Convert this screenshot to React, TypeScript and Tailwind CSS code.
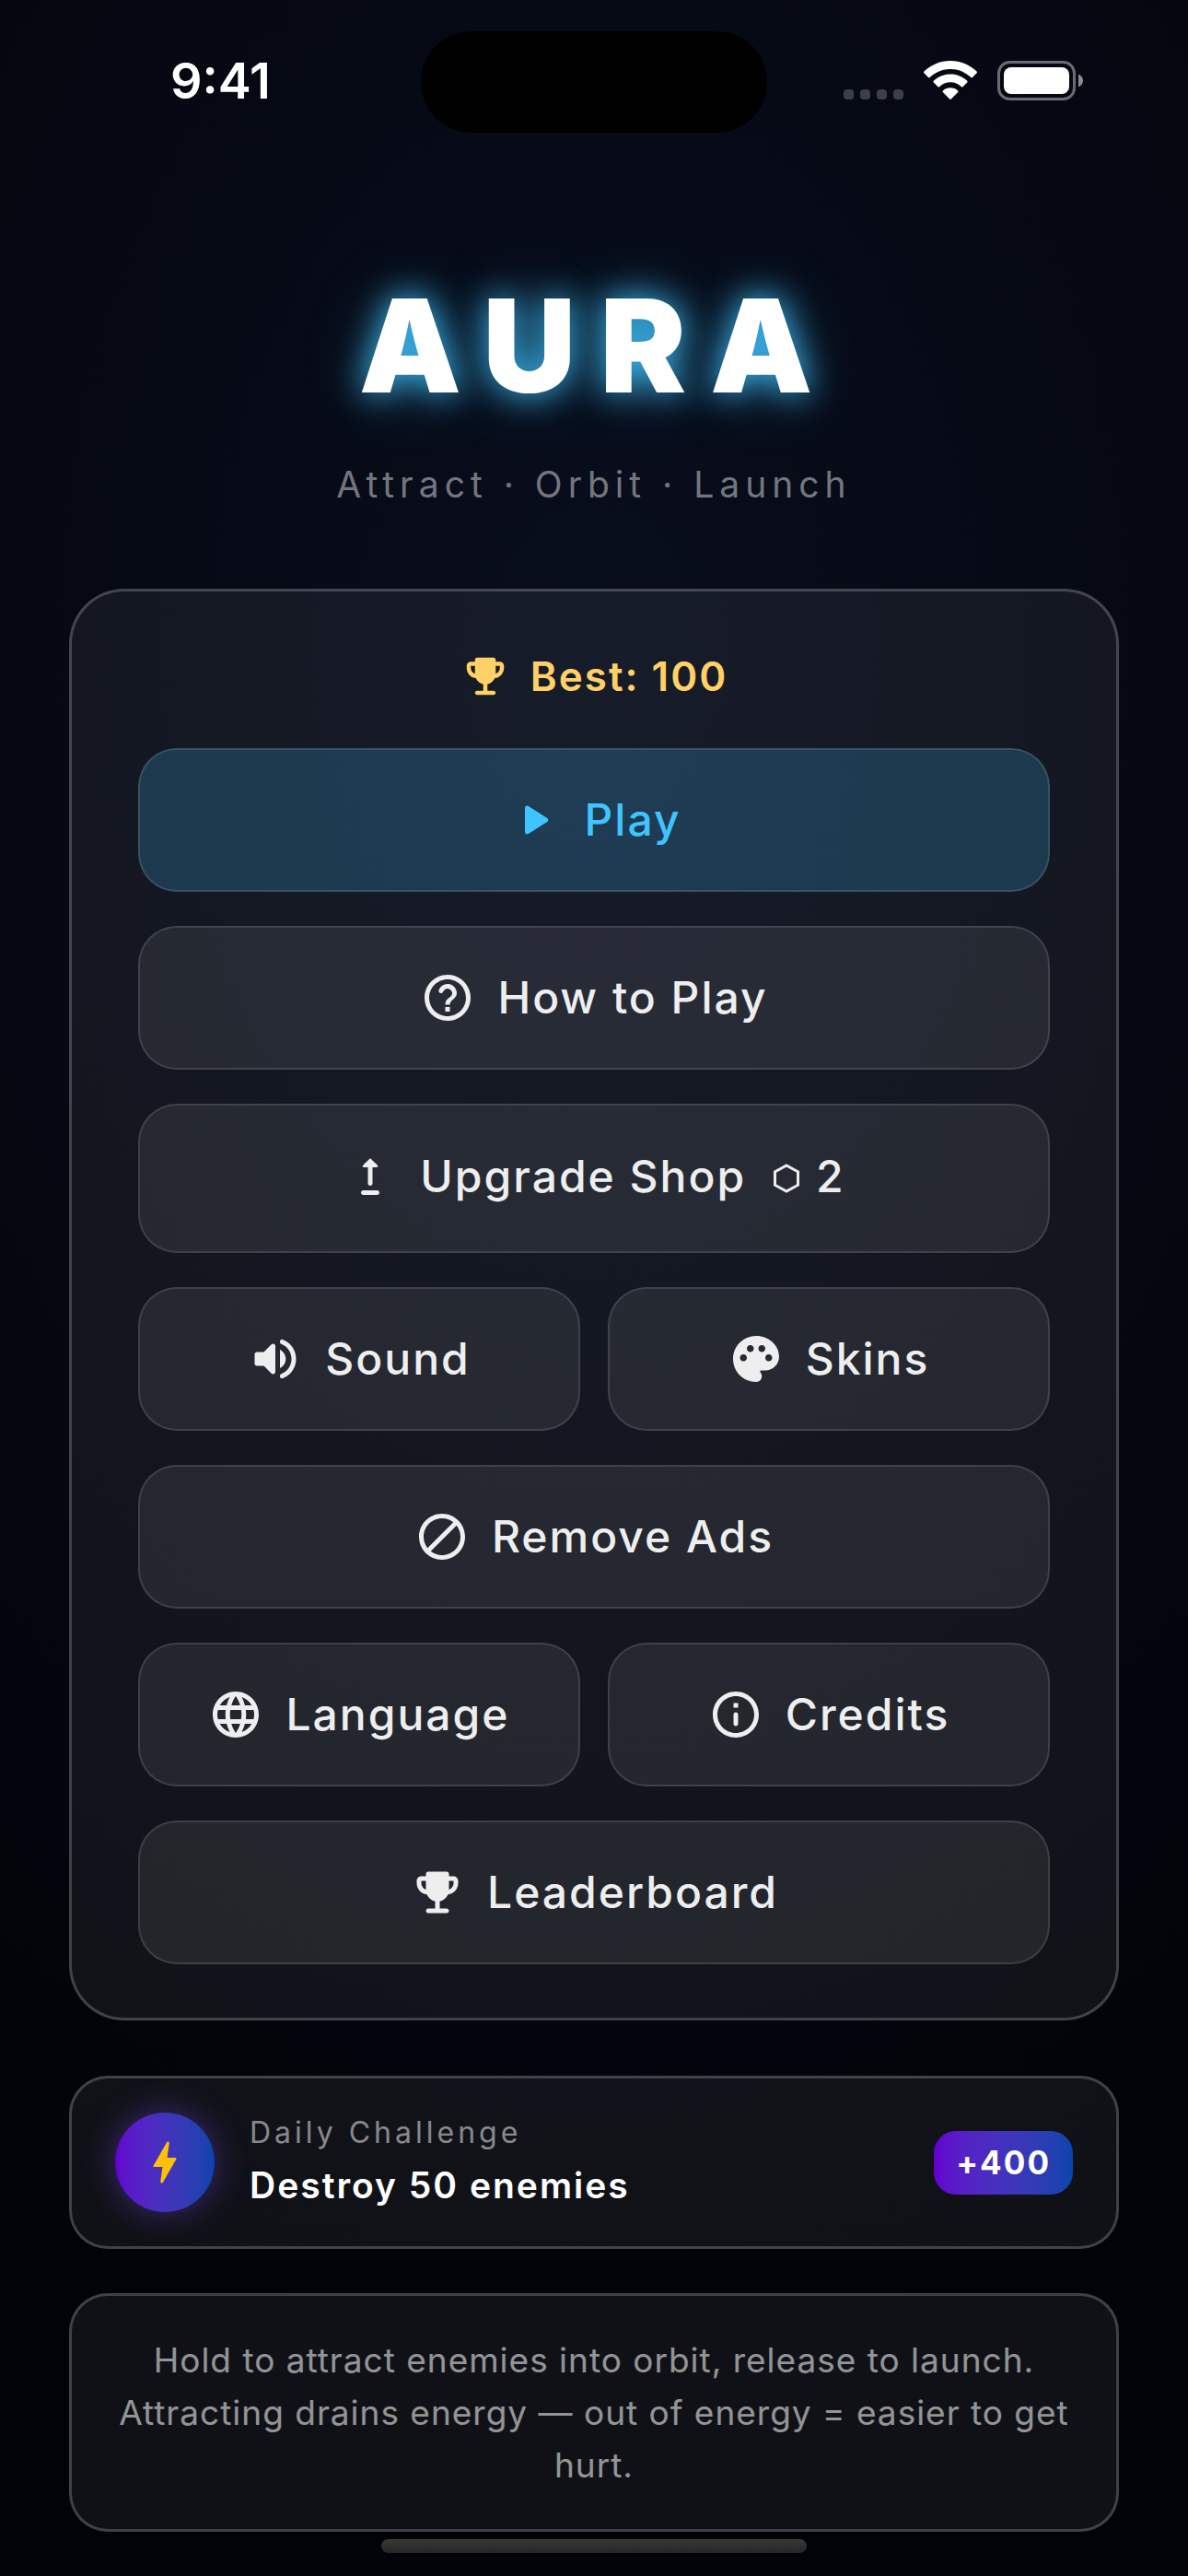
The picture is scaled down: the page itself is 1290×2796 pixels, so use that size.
import React, { type ReactNode } from "react";

type IconProps = { className?: string };

function Icon({ className = "size-[60px]", children }: IconProps & { children: ReactNode }) {
  return (
    <svg viewBox="0 0 24 24" className={`shrink-0 ${className}`} fill="currentColor" aria-hidden="true">
      {children}
    </svg>
  );
}

const TrophyIcon = ({ className }: IconProps) => (
  <Icon className={className}>
    <path d="M19 5h-2V4c0-.55-.45-1-1-1H8c-.55 0-1 .45-1 1v1H5c-1.1 0-2 .9-2 2v1c0 2.55 1.92 4.63 4.39 4.94.63 1.5 1.98 2.63 3.61 2.96V19H8c-.55 0-1 .45-1 1s.45 1 1 1h8c.55 0 1-.45 1-1s-.45-1-1-1h-3v-3.1c1.63-.33 2.98-1.46 3.61-2.96C19.08 12.63 21 10.55 21 8V7c0-1.1-.9-2-2-2zM5 8V7h2v3.82C5.84 10.4 5 9.3 5 8zm14 0c0 1.3-.84 2.4-2 2.82V7h2v1z" />
  </Icon>
);

const PlayIcon = () => (
  <Icon>
    <path d="M8 6.82v10.36c0 .79.87 1.27 1.54.84l8.14-5.18c.62-.39.62-1.29 0-1.69L9.54 5.98C8.87 5.55 8 6.03 8 6.82z" />
  </Icon>
);

const HelpIcon = () => (
  <Icon>
    <path d="M12 2C6.48 2 2 6.48 2 12s4.48 10 10 10 10-4.48 10-10S17.52 2 12 2zm0 18c-4.41 0-8-3.59-8-8s3.59-8 8-8 8 3.59 8 8-3.59 8-8 8zm-1-4h2v2h-2zm1.61-9.96c-2.06-.3-3.88.97-4.43 2.79-.18.58.26 1.17.87 1.17h.2c.41 0 .74-.29.88-.67.32-.89 1.27-1.5 2.3-1.28.95.2 1.65 1.13 1.57 2.1-.1 1.34-1.62 1.63-2.45 2.88 0 .01-.01.01-.01.02-.01.02-.02.03-.03.05-.09.15-.18.32-.25.5-.01.03-.03.05-.04.08-.01.02-.01.04-.02.07-.12.34-.2.75-.2 1.25h2c0-.42.11-.77.28-1.07.02-.03.03-.06.05-.09.08-.14.18-.27.28-.39.01-.01.02-.03.03-.04.1-.12.21-.23.33-.34.96-.91 2.26-1.65 1.99-3.56-.24-1.74-1.61-3.21-3.35-3.47z" />
  </Icon>
);

const UpgradeIcon = () => (
  <Icon>
    <path d="M16 19c0 .55-.45 1-1 1H9c-.55 0-1-.45-1-1s.45-1 1-1h6c.55 0 1 .45 1 1zM11 7.99H9.21c-.45 0-.67-.54-.35-.85l2.79-2.79c.2-.2.51-.2.71 0l2.79 2.79c.31.31.09.85-.36.85H13V15c0 .55-.45 1-1 1s-1-.45-1-1V7.99z" />
  </Icon>
);

const SoundIcon = () => (
  <Icon>
    <path d="M3 10v4c0 .55.45 1 1 1h3l3.29 3.29c.63.63 1.71.18 1.71-.71V6.41c0-.89-1.08-1.34-1.71-.71L7 9H4c-.55 0-1 .45-1 1zm13.5 2c0-1.77-1.02-3.29-2.5-4.03v8.05c1.48-.73 2.5-2.25 2.5-4.02zM14 4.45v.2c0 .38.25.71.6.85C17.18 6.53 19 9.06 19 12s-1.82 5.47-4.4 6.5c-.36.14-.6.47-.6.85v.2c0 .63.63 1.07 1.21.85C18.6 19.11 21 15.84 21 12s-2.4-7.11-5.79-8.4c-.58-.23-1.21.22-1.21.85z" />
  </Icon>
);

const PaletteIcon = () => (
  <Icon>
    <path d="M12 2C6.49 2 2 6.49 2 12s4.49 10 10 10c1.38 0 2.5-1.12 2.5-2.5 0-.61-.23-1.2-.64-1.67-.08-.1-.13-.21-.13-.33 0-.28.22-.5.5-.5H16c3.31 0 6-2.69 6-6 0-4.96-4.49-9-10-9zM6.500 13c-.83 0-1.500-.67-1.500-1.500S5.670 10 6.500 10s1.500.670 1.500 1.500S7.330 13 6.500 13zm3-4C8.670 9 8 8.330 8 7.500S8.670 6 9.500 6s1.500.670 1.500 1.500S10.330 9 9.500 9zm5 0c-.83 0-1.500-.67-1.500-1.500S13.670 6 14.500 6s1.500.670 1.500 1.500S15.330 9 14.500 9zm3 4c-.83 0-1.500-.67-1.500-1.500s.67-1.500 1.500-1.500 1.500.670 1.500 1.500-.67 1.500-1.500 1.500z" />
  </Icon>
);

const BlockIcon = () => (
  <Icon>
    <path d="M12 2C6.48 2 2 6.48 2 12s4.48 10 10 10 10-4.48 10-10S17.52 2 12 2zM4 12c0-4.42 3.58-8 8-8 1.85 0 3.55.63 4.9 1.69L5.69 16.9C4.63 15.55 4 13.85 4 12zm8 8c-1.85 0-3.55-.63-4.9-1.69L18.31 7.1C19.37 8.45 20 10.15 20 12c0 4.42-3.58 8-8 8z" />
  </Icon>
);

const GlobeIcon = () => (
  <Icon>
    <path d="M11.99 2C6.47 2 2 6.48 2 12s4.47 10 9.99 10C17.52 22 22 17.52 22 12S17.52 2 11.99 2zm6.93 6h-2.95c-.32-1.25-.78-2.45-1.38-3.56 1.84.63 3.37 1.91 4.33 3.56zM12 4.04c.83 1.2 1.48 2.53 1.91 3.96h-3.82c.43-1.43 1.08-2.76 1.91-3.96zM4.26 14C4.1 13.36 4 12.69 4 12s.1-1.36.26-2h3.38c-.08.66-.14 1.32-.14 2s.06 1.34.14 2H4.26zm.82 2h2.95c.32 1.25.78 2.45 1.38 3.56-1.84-.63-3.37-1.9-4.33-3.56zm2.95-8H5.08c.96-1.66 2.49-2.93 4.33-3.56C8.81 5.55 8.35 6.75 8.03 8zM12 19.96c-.83-1.2-1.48-2.53-1.91-3.96h3.82c-.43 1.43-1.08 2.76-1.91 3.96zM14.34 14H9.66c-.09-.66-.16-1.32-.16-2s.07-1.35.16-2h4.68c.09.65.16 1.32.16 2s-.07 1.34-.16 2zm.25 5.56c.6-1.11 1.06-2.31 1.38-3.56h2.95c-.96 1.65-2.49 2.93-4.33 3.56zM16.36 14c.08-.66.14-1.32.14-2s-.06-1.34-.14-2h3.38c.16.64.26 1.31.26 2s-.1 1.36-.26 2h-3.38z" />
  </Icon>
);

const InfoIcon = () => (
  <Icon>
    <path d="M11 7h2v2h-2zm1 10c.55 0 1-.45 1-1v-4c0-.55-.45-1-1-1s-1 .45-1 1v4c0 .55.45 1 1 1zm0-15C6.48 2 2 6.48 2 12s4.48 10 10 10 10-4.48 10-10S17.52 2 12 2zm0 18c-4.41 0-8-3.59-8-8s3.59-8 8-8 8 3.59 8 8-3.59 8-8 8z" />
  </Icon>
);

function StatusBar() {
  return (
    <header className="grid h-[178px] grid-cols-[1fr_376px_1fr] items-center">
      <div className="pb-[2px] pl-[22px] text-center text-[54px] leading-[60px] font-semibold">9:41</div>
      <div className="h-[110px] rounded-full bg-black" />
      <div className="flex items-center justify-end gap-[22px] pr-[112px] pb-[4px]">
        <div className="flex gap-[7px] pt-[30px]">
          {[0, 1, 2, 3].map((dot) => (
            <span key={dot} className="h-[11px] w-[11px] rounded-[4px] bg-[#3d3f47]" />
          ))}
        </div>
        <svg viewBox="0 0 58 43" className="h-[43px] w-[58px]" fill="white" aria-label="Wi-Fi">
          <path d="M29 0C18.200 0 8 4.200.4 11.600c-.5.500-.5 1.200 0 1.700l4.600 4.700c.5.500 1.200.5 1.700 0C12.700 12.300 20.500 9 29 9s16.300 3.300 22.300 9c.5.500 1.200.5 1.700 0l4.600-4.700c.5-.5.5-1.200 0-1.700C50 4.200 39.800 0 29 0z" />
          <path d="M29 14.600c-7 0-13.400 2.700-18.200 7.200-.5.500-.5 1.200 0 1.700l4.700 4.700c.5.500 1.100.5 1.600 0C20.300 25.200 24.500 23.300 29 23.300s8.700 1.900 11.900 4.900c.5.500 1.100.5 1.600 0l4.700-4.700c.5-.5.5-1.200 0-1.700C42.400 17.300 36 14.600 29 14.600z" />
          <path d="M29 29.200c-3.200 0-6 1.200-8.200 3.200-.5.500-.5 1.100 0 1.600l7.400 7.600c.5.500 1.100.5 1.600 0l7.400-7.600c.5-.5.500-1.100 0-1.600-2.200-2-5-3.200-8.200-3.200z" />
        </svg>
        <svg viewBox="0 0 95 43" className="h-[43px] w-[95px]" aria-label="Battery">
          <rect x="1.5" y="1.5" width="82" height="40" rx="12" fill="none" stroke="#6b6c72" strokeWidth="3" />
          <rect x="7" y="7" width="71" height="29" rx="8" fill="white" />
          <path d="M88 14.500c3 1.200 5 3.900 5 7s-2 5.800-5 7z" fill="#8b8c90" />
        </svg>
      </div>
    </header>
  );
}

type MenuButtonProps = {
  icon: ReactNode;
  children: ReactNode;
  primary?: boolean;
  tall?: boolean;
};

function MenuButton({ icon, children, primary, tall }: MenuButtonProps) {
  return (
    <button
      type="button"
      className={`flex w-full items-center justify-center gap-[24px] rounded-[42px] border-2 text-[48px] font-medium tracking-[2px] ${
        tall ? "h-[162px] pb-[4px]" : "h-[156px]"
      } ${
        primary
          ? "border-white/12 bg-[#40c4ff]/20 text-[#40c4ff]"
          : "border-white/12 bg-white/8 text-[#eeeeee]"
      }`}
    >
      {icon}
      <span className="flex items-center">{children}</span>
    </button>
  );
}

function DailyChallenge() {
  return (
    <section className="mt-[60px] flex h-[188px] items-center rounded-[42px] border-[3px] border-white/20 bg-white/6 px-[47px]">
      <div className="grid size-[108px] place-items-center rounded-full bg-linear-to-r from-[#6200ce] to-[#0644ac] shadow-[0_0_36px_rgba(124,77,255,0.4)]">
        <Icon className="size-[60px] text-[#ffc107]">
          <path d="M10.67 21c-.35 0-.62-.31-.57-.66L11 14H7.5c-.88 0-.33-.75-.31-.78 1.26-2.23 3.15-5.53 5.65-9.93.1-.18.3-.29.5-.29.35 0 .62.31.57.66L13.01 10h3.51c.4 0 .62.19.4.66-3.29 5.74-5.2 9.09-5.75 10.05-.1.18-.29.29-.5.29z" />
        </Icon>
      </div>
      <div className="ml-[38px] flex-1 pb-[4px]">
        <h2 className="text-[32px] leading-[42px] tracking-[4px] text-white/50">Daily Challenge</h2>
        <p className="mt-[12px] text-[39px] leading-[48px] font-semibold tracking-[2px] text-white">
          Destroy 50 enemies
        </p>
      </div>
      <span className="rounded-[24px] bg-linear-to-r from-[#6200ce] to-[#0644ac] px-[24px] py-[12px] text-[35px] leading-[45px] font-bold tracking-[2px] text-white">
        +400
      </span>
    </section>
  );
}

export default function App() {
  return (
    <div className="flex min-h-screen flex-col bg-[radial-gradient(1300px_1900px_at_50%_700px,#090e1d_0%,#050812_50%,#020308_100%)] font-['Inter',sans-serif] text-white">
      <StatusBar />
      <main className="flex flex-col px-[75px]">
        <h1 className="mt-[112px] pl-[8px] text-center text-[140px] leading-[170px] font-black tracking-[26px] [text-shadow:0_0_36px_#40c4ff,0_0_72px_rgba(64,196,255,0.3)]">
          AURA
        </h1>
        <p className="mt-[42px] text-center text-[39px] leading-[48px] tracking-[6px] text-white/45">
          Attract · Orbit · Launch
        </p>

        <section className="mt-[89px] flex flex-col gap-[37px] rounded-[60px] border-[3px] border-white/20 bg-white/6 px-[72px] pt-[62px] pb-[58px]">
          <p className="mb-[11px] flex h-[60px] items-center justify-center gap-[22px] text-[44px] font-semibold tracking-[2px] text-[#ffd166]">
            <TrophyIcon className="size-[54px]" />
            Best: 100
          </p>
          <MenuButton primary icon={<PlayIcon />}>Play</MenuButton>
          <MenuButton icon={<HelpIcon />}>How to Play</MenuButton>
          <MenuButton tall icon={<UpgradeIcon />}>
            Upgrade Shop
            <svg viewBox="0 0 28 32" className="mt-[4px] mr-[18px] ml-[30px] h-[32px] w-[28px]" fill="none" stroke="currentColor" strokeWidth="3" aria-hidden="true">
              <path d="M14 2 26.500 8.800V23.200L14 30 1.500 23.200V8.800z" />
            </svg>
            2
          </MenuButton>
          <div className="grid grid-cols-2 gap-[30px]">
            <MenuButton icon={<SoundIcon />}>Sound</MenuButton>
            <MenuButton icon={<PaletteIcon />}>Skins</MenuButton>
          </div>
          <MenuButton icon={<BlockIcon />}>Remove Ads</MenuButton>
          <div className="grid grid-cols-2 gap-[30px]">
            <MenuButton icon={<GlobeIcon />}>Language</MenuButton>
            <MenuButton icon={<InfoIcon />}>Credits</MenuButton>
          </div>
          <MenuButton icon={<TrophyIcon />}>Leaderboard</MenuButton>
        </section>

        <DailyChallenge />

        <section className="mt-[48px] rounded-[42px] border-[3px] border-white/20 bg-white/6 px-[48px] pt-[41px] pb-[41px] text-center text-[37px] leading-[57px] tracking-[1px] text-white/55">
          Hold to attract enemies into orbit, release to launch. Attracting drains energy — out of energy = easier to
          get hurt.
        </section>
      </main>
      <div className="mx-auto mt-[8px] h-[15px] w-[462px] rounded-full bg-linear-to-b from-[#393939] to-[#262627]" />
    </div>
  );
}
